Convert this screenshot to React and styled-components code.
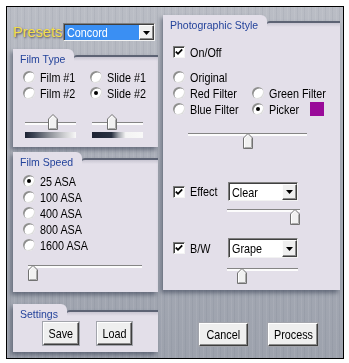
import React from "react";
import styled, { createGlobalStyle } from "styled-components";

const GlobalStyle = createGlobalStyle`
  html, body { margin: 0; padding: 0; background: #fff; }
  body { font-family: "Liberation Sans", Arial, sans-serif; }
`;

const PANEL = "#e3dfe9";

const Frame = styled.div`
  width: 349px;
  height: 363px;
  box-sizing: border-box;
  padding: 6px 5px 4px 6px;
  background: #fff;
`;

const Window = styled.div`
  height: 100%;
  box-sizing: border-box;
  border: 1px solid #000;
  display: flex;
  gap: 5px;
  padding: 8px 2px 0 6px;
  background:
    repeating-linear-gradient(90deg, rgba(255,255,255,0.07) 0 1px, transparent 1px 3px, rgba(40,50,70,0.06) 3px 4px, transparent 4px 7px),
    linear-gradient(180deg, #babdc5 0%, #aaaeb8 45%, #9da2ad 100%);
`;

const LeftCol = styled.div`
  width: 145px;
  display: flex;
  flex-direction: column;
`;

const RightCol = styled.div`
  width: 177px;
  display: flex;
  flex-direction: column;
`;

/* the reference uses a narrow sans; squeeze Liberation Sans to its width */
const Narrow = styled.span`
  display: inline-block;
  font-size: 13px;
  white-space: nowrap;
  transform: scaleX(0.83);
  transform-origin: ${p => (p.$center ? "50% 50%" : "0 50%")};
`;

const PresetsRow = styled.div`
  margin-top: 8px;
  height: 18px;
  display: flex;
  align-items: center;
`;

const PresetsLabel = styled.span`
  width: 50px;
  font-size: 14.5px;
  color: #f3dd4a;
  text-shadow: 1px 1px 2px rgba(40,40,50,0.8);
`;

const PanelBox = styled.section`
  display: flex;
  flex-direction: column;
  margin-top: ${p => p.$top || 0}px;
  filter: drop-shadow(-2px 3px 2px rgba(50, 58, 78, 0.55));
`;

const HeaderRow = styled.div`
  display: flex;
  align-items: flex-end;
  height: 16px;
`;

const Tab = styled.div`
  height: 16px;
  box-sizing: border-box;
  padding: 4px 9px 0 7px;
  background: ${PANEL};
  border-top-right-radius: 6px;
  font-size: 10.5px;
  line-height: 12px;
  color: #24439b;
  white-space: nowrap;
`;

const TabLine = styled.div`
  flex: 1;
  height: 10px;
  box-sizing: border-box;
  background: linear-gradient(180deg, #c9c6d2 0, ${PANEL} 4px);
  border-top: 2px solid #5d6374;
  border-top-left-radius: 3px;
`;

const Body = styled.div`
  background: ${PANEL};
  height: ${p => p.$height}px;
  box-sizing: border-box;
  padding: ${p => p.$pad};
`;

const Panel = ({ title, top, height, pad, children }) => (
  <PanelBox $top={top}>
    <HeaderRow>
      <Tab>{title}</Tab>
      <TabLine />
    </HeaderRow>
    <Body $height={height} $pad={pad}>{children}</Body>
  </PanelBox>
);

const OptionRow = styled.div`
  height: ${p => p.$h || 16}px;
  display: flex;
  align-items: center;
  gap: 5px;
  color: #000;
`;

const RadioDot = styled.span`
  width: 12px;
  height: 12px;
  flex: none;
  box-sizing: border-box;
  border-radius: 50%;
  background: #fff;
  box-shadow: inset 1.5px 1.5px 0 #8e8e8e, inset -1px -1px 0 #dcdcdc;
  display: inline-flex;
  align-items: center;
  justify-content: center;
  &::after {
    content: "";
    display: ${p => (p.$on ? "block" : "none")};
    width: 4px;
    height: 4px;
    border-radius: 50%;
    background: #000;
  }
`;

const Radio = ({ on, children }) => (
  <OptionRow>
    <RadioDot $on={on} />
    <Narrow>{children}</Narrow>
  </OptionRow>
);

const CheckBox = styled.span`
  width: 12px;
  height: 12px;
  flex: none;
  box-sizing: border-box;
  background: #fff;
  border-top: 1px solid #7c7c7c;
  border-left: 1px solid #7c7c7c;
  border-right: 1px solid #f4f4f4;
  border-bottom: 1px solid #f4f4f4;
  box-shadow: inset 1px 1px 0 #3c3c3c;
  display: inline-flex;
  align-items: center;
  justify-content: center;
`;

const Check = () => (
  <CheckBox>
    <svg width="8" height="8" viewBox="0 0 8 8">
      <path d="M0.8 3.6 L3 5.8 L7.2 1.4" fill="none" stroke="#000" strokeWidth="1.8" />
    </svg>
  </CheckBox>
);

const SliderBox = styled.div`
  position: relative;
  width: ${p => p.$width}px;
  height: 16px;
  flex: none;
  margin: ${p => p.$margin || "0"};
`;

const Track = styled.div`
  margin-top: 8px;
  height: 2px;
  border-top: 1px solid #858585;
  background: #fcfcfc;
`;

const Thumb = styled.div`
  position: absolute;
  top: 0;
  width: 10px;
  height: 16px;
  display: flex;
`;

const Slider = ({ width, value, margin }) => (
  <SliderBox $width={width} $margin={margin}>
    <Track />
    <Thumb style={{ left: Math.round(value * (width - 10)) }}>
      <svg width="10" height="16" viewBox="0 0 10 16">
        <path d="M0.5 15.5V5L5 0.5L9.5 5V15.5Z" fill="#f1f1f1" stroke="#727272" />
        <path d="M1.5 14.5V5.4L5 1.9" fill="none" stroke="#ffffff" />
        <path d="M8.5 5.4V14.5H1.5" fill="none" stroke="#aaaaaa" />
      </svg>
    </Thumb>
  </SliderBox>
);

const GradBar = styled.div`
  width: 51px;
  height: 6px;
  margin: 2px 0 0 2px;
  background: ${p =>
    p.$sharp
      ? "linear-gradient(90deg, #1d2333 0%, #283040 38%, #9fa3aa 52%, #f4f4f4 66%, #f8f8f8 100%)"
      : "linear-gradient(90deg, #1d2333 0%, #3e4555 18%, #8d9198 48%, #d0d1d3 78%, #f8f8f8 100%)"};
`;

const SelectBox = styled.div`
  width: ${p => p.$width}px;
  height: ${p => p.$height}px;
  box-sizing: border-box;
  display: flex;
  border-top: 1px solid #808080;
  border-left: 1px solid #808080;
  border-right: 1px solid #f2f2f2;
  border-bottom: 1px solid #f2f2f2;
  box-shadow: inset 1px 1px 0 #404040;
  background: #fff;
  padding: 1px 0 0 1px;
`;

const SelectText = styled.div`
  flex: 1;
  display: flex;
  align-items: center;
  padding-left: 2px;
  overflow: hidden;
  background: ${p => (p.$hi ? "#3a8ff3" : "#fff")};
  color: ${p => (p.$hi ? "#fff" : "#000")};
`;

const DropBtn = styled.div`
  width: 15px;
  flex: none;
  box-sizing: border-box;
  background: #efefef;
  border-top: 1px solid #fdfdfd;
  border-left: 1px solid #fdfdfd;
  border-right: 1px solid #404040;
  border-bottom: 1px solid #404040;
  box-shadow: inset -1px -1px 0 #8c8c8c;
  display: flex;
  align-items: center;
  justify-content: center;
`;

const Select = ({ width, height = 19, hi, children }) => (
  <SelectBox $width={width} $height={height}>
    <SelectText $hi={hi}><Narrow>{children}</Narrow></SelectText>
    <DropBtn>
      <svg width="7" height="4" viewBox="0 0 7 4">
        <polygon points="0,0 7,0 3.5,4" fill="#000" />
      </svg>
    </DropBtn>
  </SelectBox>
);

const ButtonFace = styled.button`
  width: ${p => p.$width}px;
  height: 23px;
  padding: 0;
  font-family: inherit;
  color: #000;
  background: #efefef;
  border-top: 1px solid #ffffff;
  border-left: 1px solid #ffffff;
  border-right: 1px solid #3e3e3e;
  border-bottom: 1px solid #3e3e3e;
  box-shadow: inset -1px -1px 0 #8c8c8c, 0 0 0 1px #a3a5ac;
`;

const Button = ({ width, children }) => (
  <ButtonFace $width={width}>
    <Narrow $center>{children}</Narrow>
  </ButtonFace>
);

const TwoCols = styled.div`
  display: grid;
  grid-template-columns: ${p => p.$first}px 1fr;
  margin-top: ${p => p.$top || 0}px;
`;

const Column = styled.div`
  display: flex;
  flex-direction: column;
`;

const Swatch = styled.span`
  width: 14px;
  height: 14px;
  margin-left: auto;
  margin-right: 19px;
  background: #990a99;
`;

const ButtonRow = styled.div`
  display: flex;
  gap: ${p => p.$gap}px;
  justify-content: ${p => (p.$end ? "flex-end" : "flex-start")};
  margin-top: ${p => p.$top || 0}px;
  padding-right: ${p => p.$right || 0}px;
`;

const ControlRow = styled.div`
  display: grid;
  grid-template-columns: 55px auto;
  align-items: center;
  margin-top: ${p => p.$top}px;
`;

export default function App() {
  return (
    <>
      <GlobalStyle />
      <Frame>
        <Window>
          <LeftCol>
            <PresetsRow>
              <PresetsLabel>Presets</PresetsLabel>
              <Select width={92} height={18} hi>Concord</Select>
            </PresetsRow>

            <Panel title="Film Type" top={8} height={82} pad="4px 0 0 10px">
              <TwoCols $first={67}>
                <Column>
                  <Radio>Film #1</Radio>
                  <Radio>Film #2</Radio>
                  <Slider width={51} value={0.55} margin="13px 0 0 2px" />
                  <GradBar />
                </Column>
                <Column>
                  <Radio>Slide #1</Radio>
                  <Radio on>Slide #2</Radio>
                  <Slider width={51} value={0.37} margin="13px 0 0 2px" />
                  <GradBar $sharp />
                </Column>
              </TwoCols>
            </Panel>

            <Panel title="Film Speed" top={5} height={124} pad="5px 0 0 10px">
              <Radio on>25 ASA</Radio>
              <Radio>100 ASA</Radio>
              <Radio>400 ASA</Radio>
              <Radio>800 ASA</Radio>
              <Radio>1600 ASA</Radio>
              <Slider width={114} value={0} margin="12px 0 0 5px" />
            </Panel>

            <Panel title="Settings" top={12} height={32} pad="2px 0 0 30px">
              <ButtonRow $gap={18}>
                <Button width={36}>Save</Button>
                <Button width={35}>Load</Button>
              </ButtonRow>
            </Panel>
          </LeftCol>

          <RightCol>
            <Panel title="Photographic Style" height={259} pad="13px 0 0 10px">
              <OptionRow>
                <Check />
                <Narrow>On/Off</Narrow>
              </OptionRow>
              <TwoCols $first={79} $top={9}>
                <Radio>Original</Radio>
                <span />
                <Radio>Red Filter</Radio>
                <Radio>Green Filter</Radio>
                <Radio>Blue Filter</Radio>
                <OptionRow>
                  <RadioDot $on />
                  <Narrow>Picker</Narrow>
                  <Swatch />
                </OptionRow>
              </TwoCols>
              <Slider width={119} value={0.5} margin="16px 0 0 15px" />

              <ControlRow $top={33}>
                <OptionRow $h={19}>
                  <Check />
                  <Narrow>Effect</Narrow>
                </OptionRow>
                <Select width={70}>Clear</Select>
              </ControlRow>
              <Slider width={73} value={1} margin="8px 0 0 54px" />

              <ControlRow $top={13}>
                <OptionRow $h={20}>
                  <Check />
                  <Narrow>B/W</Narrow>
                </OptionRow>
                <Select width={70} height={20}>Grape</Select>
              </ControlRow>
              <Slider width={71} value={0.16} margin="10px 0 0 54px" />
            </Panel>

            <ButtonRow $gap={20} $end $top={33} $right={22}>
              <Button width={49}>Cancel</Button>
              <Button width={50}>Process</Button>
            </ButtonRow>
          </RightCol>
        </Window>
      </Frame>
    </>
  );
}
